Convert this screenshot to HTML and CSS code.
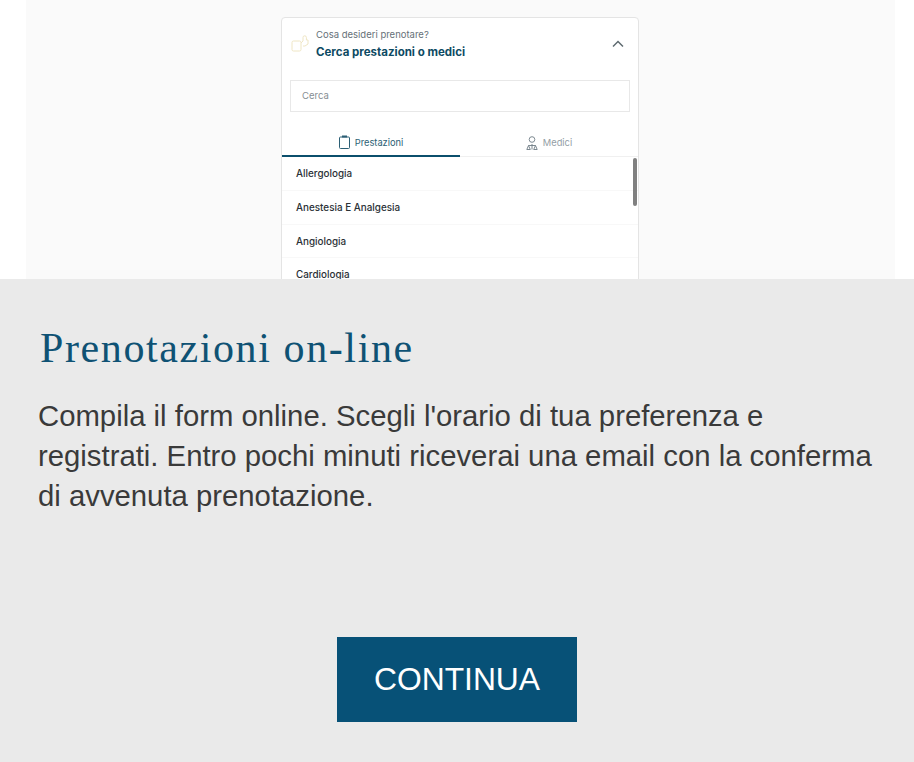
FILE: index.html
```html
<!DOCTYPE html>
<html lang="it">
<head>
<meta charset="utf-8">
<title>Prenotazioni on-line</title>
<link rel="stylesheet" href="styles.css">
</head>
<body>
<section class="preview">
  <div class="panel">
    <div class="card">
      <header class="card-head">
        <svg class="hand" width="18" height="20" viewBox="0 0 18 20" fill="none" stroke="#efe6c4" stroke-width="1"><rect x="1" y="7" width="9" height="10" rx="1.5"/><path d="M10 9l2-2V3.500a1.700 1.700 0 1 1 3.400 0V6h1.600v4l-3 2h-2"/></svg>
        <div class="head-text">
          <div class="head-sub">Cosa desideri prenotare?</div>
          <div class="head-title">Cerca prestazioni o medici</div>
        </div>
        <svg class="chev" width="12" height="8" viewBox="0 0 12 8" fill="none" stroke="#5f6b70" stroke-width="1.500"><path d="M1 6.500L6 1.500l5 5"/></svg>
      </header>
      <div class="search">Cerca</div>
      <div class="tabs">
        <div class="tab active">
          <svg width="11" height="14" viewBox="0 0 11 14" fill="none" stroke="#2c5f75" stroke-width="1"><rect x=".5" y="2" width="10" height="11.500" rx="1"/><path d="M3 1.500h5" stroke-width="2"/></svg>
          <span>Prestazioni</span>
        </div>
        <div class="tab">
          <svg width="12" height="14" viewBox="0 0 12 14" fill="none" stroke="#6f7d86" stroke-width=".9"><circle cx="6" cy="3.500" r="2.800"/><path d="M.8 13.500l1.700-4h7l1.700 4M.8 13.500h3.500l-1.800-4M7.700 13.500h3.500M7.700 13.500l1.800-4M6 8v5.500"/></svg>
          <span>Medici</span>
        </div>
      </div>
      <div class="list-wrap">
        <ul class="list">
          <li>Allergologia</li>
          <li>Anestesia E Analgesia</li>
          <li>Angiologia</li>
          <li>Cardiologia</li>
        </ul>
        <div class="thumb"></div>
      </div>
    </div>
  </div>
</section>
<section class="info">
  <h1>Prenotazioni on-line</h1>
  <p>Compila il form online. Scegli l'orario di tua preferenza e registrati. Entro pochi minuti riceverai una email con la conferma di avvenuta prenotazione.</p>
  <div class="actions"><a class="btn">CONTINUA</a></div>
</section>
</body>
</html>
```
FILE: styles.css
```css
* { box-sizing: border-box; }
html, body { margin: 0; padding: 0; }
body { width: 914px; height: 762px; overflow: hidden; background: #eaeaea; font-family: "Liberation Sans", Arial, sans-serif; }

.preview { height: 279px; background: #fff; padding: 0 19px 0 26px; overflow: hidden; }
.panel { height: 279px; background: #fafafa; padding: 17px 0 0 255px; }
.card { position: relative; width: 358px; height: 300px; background: #fff; border: 1px solid #e4e4e4; border-radius: 4px; font-family: Inter, sans-serif; }

.card-head { display: flex; align-items: center; height: 52px; padding: 0 14px 0 9px; }
.hand { flex: none; }
.head-text { flex: 1; margin-left: 7px; margin-top: -2px; }
.head-sub { font-size: 9.500px; line-height: 12px; color: #667178; margin-top: 1px; }
.head-title { font-size: 11.500px; line-height: 14px; font-weight: 700; color: #0d4a63; margin-top: 4px; }
.chev { flex: none; }

.search { height: 32px; margin: 10px 8px 0; border: 1px solid #e8e8e8; padding: 0 11px; font-size: 9.500px; line-height: 30px; color: #868d92; }

.tabs { display: flex; height: 45px; border-bottom: 1px solid #f0f0f0; }
.tab { flex: 1; display: flex; align-items: center; justify-content: center; gap: 5px; padding-top: 17px; font-size: 9.300px; color: #939ea5; }
.tab.active { color: #2c5f75; border-bottom: 2px solid #0b4f6c; margin-bottom: -1px; flex: 0 0 178px; }

.list-wrap { position: relative; }
.list { list-style: none; margin: 0; padding: 0.4px 0 0; }
.list li { height: 33.600px; padding: 0 14px; font-size: 9.900px; line-height: 33.600px; color: #2a3136; font-weight: 500; border-bottom: 1px solid #f8f8f8; }
.thumb { position: absolute; top: 1px; right: 1px; width: 4px; height: 48px; background: #808080; border-radius: 2px; }

.info { height: 483px; padding: 47px 38px 0; }
h1 { margin: 0 0 0 2px; font-family: "Liberation Serif", serif; font-weight: 400; font-size: 42px; line-height: 44px; letter-spacing: 1.600px; color: #0f5274; }
p { margin: 26px 0 0; font-size: 29.300px; line-height: 40px; color: #3a3a3a; }
.actions { display: flex; margin-top: 121px; padding-left: 299px; }
.btn { display: block; width: 240px; height: 85px; background: #075177; color: #fff; font-size: 31.800px; line-height: 85px; text-align: center; }
```
